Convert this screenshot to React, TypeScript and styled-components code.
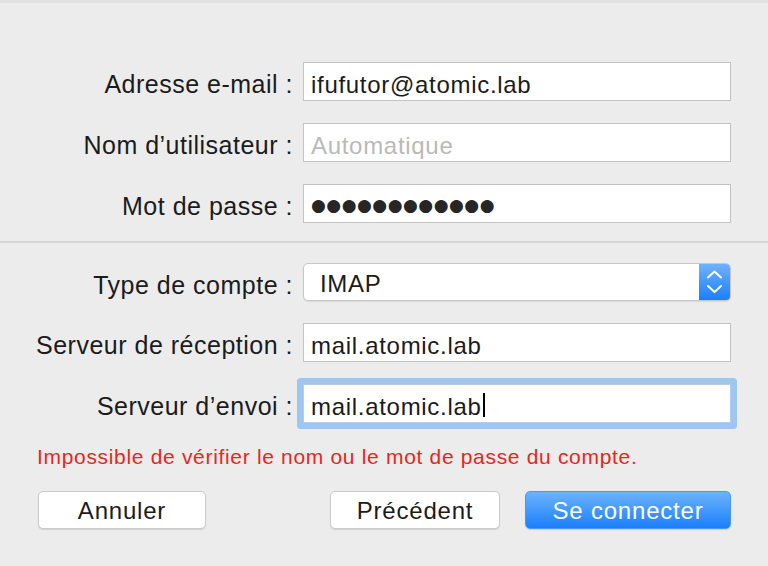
import * as React from 'react';
import styled, { createGlobalStyle } from 'styled-components';

const GlobalStyle = createGlobalStyle`
  html, body {
    margin: 0;
    padding: 0;
    background: #ececec;
  }
  * {
    box-sizing: border-box;
  }
`;

const Window = styled.div`
  width: 768px;
  height: 566px;
  background: #ececec;
  border-top: 3px solid #e2e2e2;
  font-family: 'Liberation Sans', Arial, sans-serif;
  color: #1b1b1b;
  overflow: hidden;
`;

const FormGrid = styled.div<{ $top: number }>`
  display: grid;
  grid-template-columns: 293px 428px;
  column-gap: 10px;
  row-gap: 22px;
  align-items: center;
  padding-top: ${(p) => p.$top}px;
`;

const Label = styled.label`
  padding-top: 6px;
  text-align: right;
  font-size: 25px;
  letter-spacing: 0.5px;
  white-space: nowrap;
`;

const Field = styled.div<{ $focused?: boolean }>`
  display: flex;
  align-items: center;
  height: 39px;
  padding: 6px 7px 0;
  background: #ffffff;
  border: 1px solid ${(p) => (p.$focused ? '#b4cdea' : '#c3c3c3')};
  border-radius: ${(p) => (p.$focused ? '1px' : '0')};
  box-shadow: ${(p) => (p.$focused ? '0 0 0 6px #9fc6f0' : 'none')};
  font-size: 24px;
  letter-spacing: 0.7px;
  white-space: nowrap;
`;

const Placeholder = styled.span`
  color: #b9b9b9;
`;

const Dots = styled.span`
  margin-top: -4px;
  font-family: 'DejaVu Sans', sans-serif;
  font-size: 17px;
  letter-spacing: 0.5px;
  color: #262626;
`;

const Caret = styled.span`
  display: inline-block;
  width: 2px;
  height: 24px;
  margin: -3px 0 0 1px;
  background: #000000;
`;

const Divider = styled.hr`
  border: none;
  height: 2px;
  margin: 18px 0 0;
  background: #d6d6d6;
`;

const Select = styled.div`
  display: flex;
  height: 38px;
  background: #ffffff;
  border: 1px solid #c7c7c7;
  border-radius: 5px;
  box-shadow: 0 1px 1px rgba(0, 0, 0, 0.08);
  overflow: hidden;
`;

const SelectValue = styled.div`
  flex: 1;
  display: flex;
  align-items: center;
  padding: 4px 0 0 16px;
  font-size: 24px;
  letter-spacing: 0.7px;
`;

const Stepper = styled.div`
  width: 31px;
  display: flex;
  align-items: center;
  justify-content: center;
  background: linear-gradient(#6fb2fd, #1b7ffb);
`;

const ErrorText = styled.p`
  margin: 22px 0 0 37px;
  font-size: 21px;
  line-height: 24px;
  letter-spacing: 0.68px;
  color: #e7271d;
`;

const ButtonRow = styled.div`
  display: flex;
  align-items: center;
  gap: 25px;
  margin-top: 22px;
  padding: 0 37px 0 38px;
`;

const Spacer = styled.div`
  flex: 1;
`;

const Button = styled.button<{ $width: number; $primary?: boolean }>`
  width: ${(p) => p.$width}px;
  height: 38px;
  padding: 2px 0 0;
  border-radius: 5px;
  border: ${(p) => (p.$primary ? '1px solid #4a98fc' : '1px solid #cbcbcb')};
  background: ${(p) => (p.$primary ? 'linear-gradient(#6cb3fd, #1a7ffb)' : '#ffffff')};
  box-shadow: 0 1px 1px rgba(0, 0, 0, 0.12);
  color: ${(p) => (p.$primary ? '#ffffff' : '#1b1b1b')};
  font-family: 'Liberation Sans', Arial, sans-serif;
  font-size: 24px;
  letter-spacing: 0.8px;
`;

function StepperIcon() {
  return (
    <svg width="31" height="36" viewBox="0 0 31 36" fill="none">
      <path d="M9 13.5 L15.5 7.5 L22 13.5" stroke="#ffffff" strokeWidth="2" strokeLinecap="round" strokeLinejoin="round" />
      <path d="M9 22 L15.5 28 L22 22" stroke="#ffffff" strokeWidth="2" strokeLinecap="round" strokeLinejoin="round" />
    </svg>
  );
}

export default function App(): React.ReactElement {
  return (
    <>
      <GlobalStyle />
      <Window>
        <FormGrid $top={59}>
          <Label>Adresse e-mail :</Label>
          <Field>ifufutor@atomic.lab</Field>

          <Label>Nom d’utilisateur :</Label>
          <Field>
            <Placeholder>Automatique</Placeholder>
          </Field>

          <Label>Mot de passe :</Label>
          <Field>
            <Dots>●●●●●●●●●●●●</Dots>
          </Field>
        </FormGrid>

        <Divider />

        <FormGrid $top={20}>
          <Label>Type de compte :</Label>
          <Select>
            <SelectValue>IMAP</SelectValue>
            <Stepper>
              <StepperIcon />
            </Stepper>
          </Select>

          <Label>Serveur de réception :</Label>
          <Field>mail.atomic.lab</Field>

          <Label>Serveur d’envoi :</Label>
          <Field $focused>
            mail.atomic.lab
            <Caret />
          </Field>
        </FormGrid>

        <ErrorText>Impossible de vérifier le nom ou le mot de passe du compte.</ErrorText>

        <ButtonRow>
          <Button $width={168}>Annuler</Button>
          <Spacer />
          <Button $width={170}>Précédent</Button>
          <Button $width={206} $primary>
            Se connecter
          </Button>
        </ButtonRow>
      </Window>
    </>
  );
}
